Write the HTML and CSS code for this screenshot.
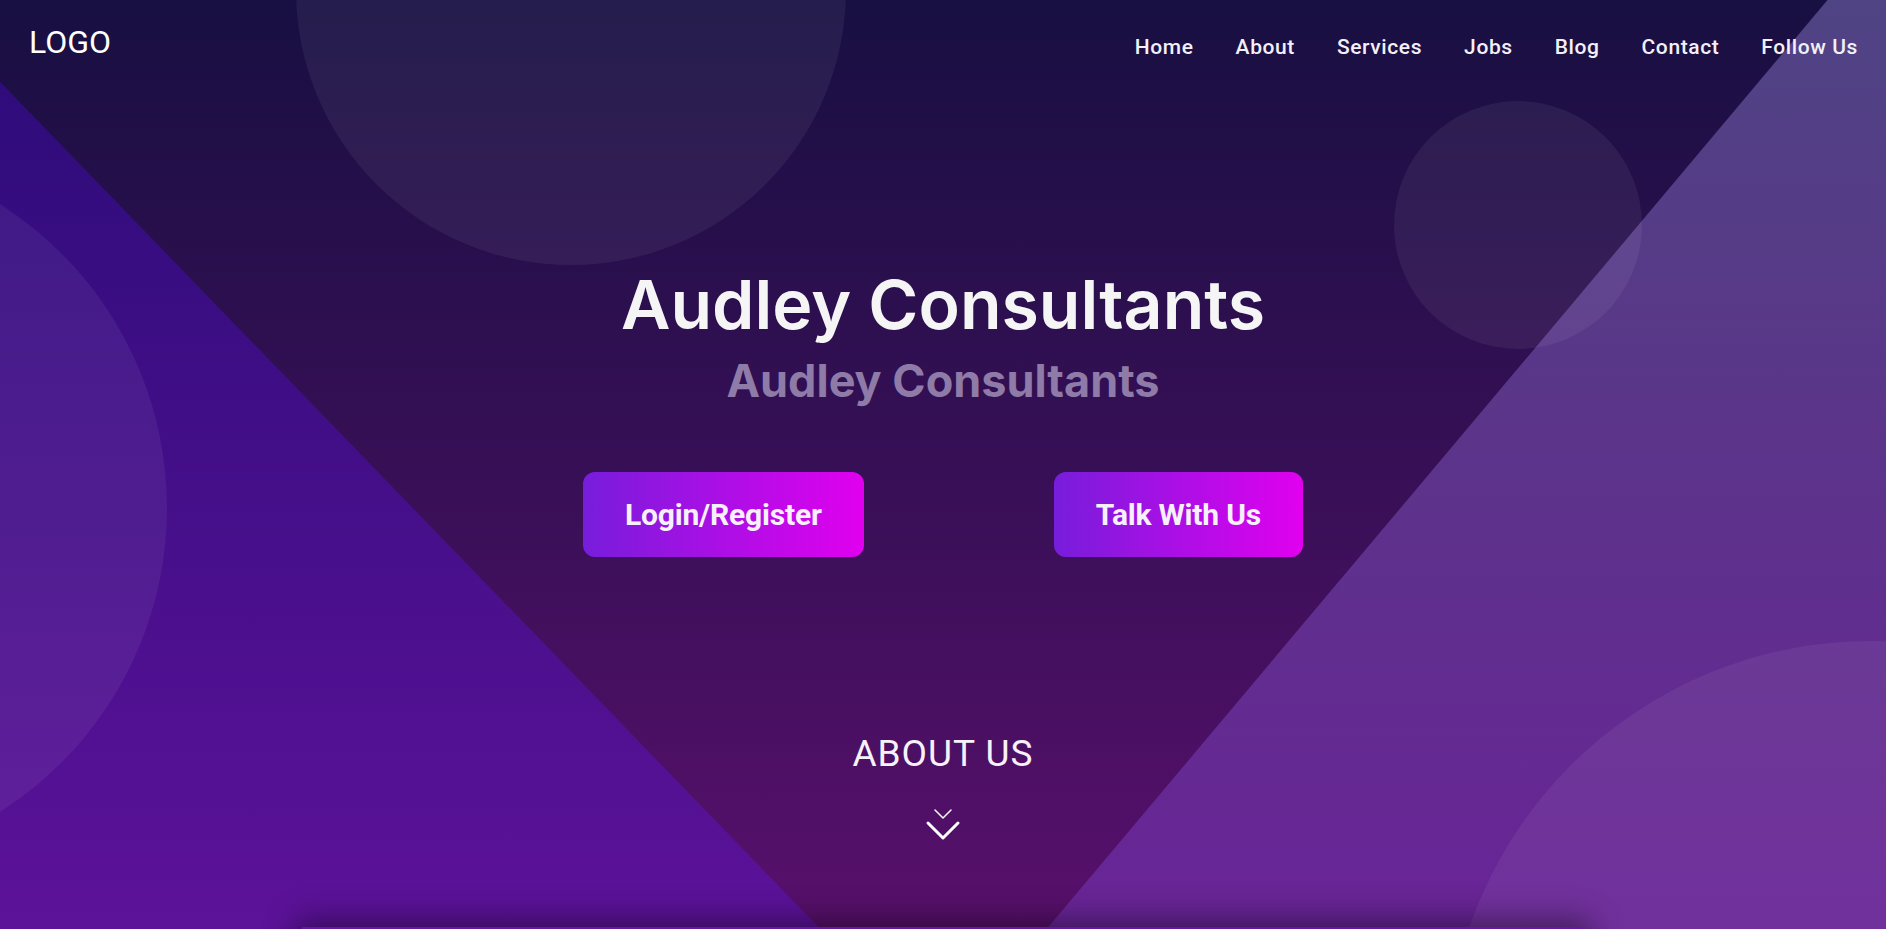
FILE: index.html
```html
<!DOCTYPE html>
<html lang="en">
<head>
    <meta charset="UTF-8">
    <meta name="viewport" content="width=device-width, initial-scale=1.0">
    <title>Audley Consultants</title>
    <link rel="stylesheet" href="styles.css">
</head>
<body>
    <section class="hero">
        <div class="shape shape-left"></div>
        <div class="shape shape-right"></div>
        <span class="bubble bubble-top"></span>
        <span class="bubble bubble-side"></span>
        <span class="bubble bubble-small"></span>
        <span class="bubble bubble-corner"></span>

        <header class="topbar">
            <a href="#" class="logo">LOGO</a>
            <nav class="menu">
                <a href="#">Home</a>
                <a href="#">About</a>
                <a href="#">Services</a>
                <a href="#">Jobs</a>
                <a href="#">Blog</a>
                <a href="#">Contact</a>
                <a href="#">Follow Us</a>
            </nav>
        </header>

        <div class="hero-content">
            <h1>Audley Consultants</h1>
            <p class="subtitle">Audley Consultants</p>

            <div class="actions">
                <a href="#" class="btn">Login/Register</a>
                <a href="#" class="btn">Talk With Us</a>
            </div>

            <h2 class="about-link">ABOUT US</h2>
            <svg class="scroll-down" width="36" height="34" viewBox="0 0 36 34" fill="none" stroke="#fff" stroke-linecap="round" stroke-linejoin="round">
                <path d="M10 3 L18 11 L26 3" stroke-width="1.5"/>
                <path d="M3 16 L18 31 L33 16" stroke-width="3"/>
            </svg>
        </div>
    </section>

    <section class="about">
        <div class="about-card"></div>
    </section>
</body>
</html>
```

FILE: styles.css
```css
html {
    scrollbar-width: none;
}

body::-webkit-scrollbar {
    display: none;
}

body {
    margin: 0;
    font-family: Roboto, "Liberation Sans", sans-serif;
    background-color: #58106c;
    color: #fff;
}

a {
    color: inherit;
    text-decoration: none;
}

.hero {
    position: relative;
    height: 100vh;
    overflow: hidden;
    background: linear-gradient(180deg, #180f42 0%, #370f56 50%, #58106c 100%);
}

/* background decoration */
.shape {
    position: absolute;
    inset: 0;
}

.shape-left {
    background: linear-gradient(180deg, #2a0b78 0%, #5c1299 100%);
    clip-path: polygon(0 8.8%, 43.5% 100%, 0 100%);
}

.shape-right {
    background: linear-gradient(180deg, #4f4484 0%, #5b3589 45%, #692497 100%);
    clip-path: polygon(96.9% 0, 100% 0, 100% 100%, 55.5% 100%);
}

.bubble {
    position: absolute;
    border-radius: 50%;
    background-color: rgba(255, 255, 255, 0.06);
}

.bubble-top {
    left: 296px;
    top: -285px;
    width: 550px;
    height: 550px;
}

.bubble-side {
    left: -553px;
    top: 148px;
    width: 720px;
    height: 720px;
}

.bubble-small {
    left: 1394px;
    top: 101px;
    width: 248px;
    height: 248px;
}

.bubble-corner {
    left: 1446px;
    top: 641px;
    width: 850px;
    height: 850px;
}

/* header */
.topbar {
    position: relative;
    display: flex;
    justify-content: space-between;
    align-items: flex-start;
    padding: 27px 28px 0 29px;
}

.logo {
    font-size: 32px;
    line-height: 31px;
}

.menu {
    display: flex;
    gap: 42px;
    margin-top: 8px;
}

.menu a {
    font-size: 21px;
    line-height: 24px;
    font-weight: 500;
    letter-spacing: 0.6px;
    color: #f3f0f8;
}

/* hero */
.hero-content {
    position: relative;
    display: flex;
    flex-direction: column;
    align-items: center;
    padding-top: 204px;
}

.hero-content h1 {
    margin: 0;
    font-family: Inter, "Noto Sans", sans-serif;
    font-size: 68px;
    line-height: 82px;
    font-weight: 600;
    color: #f5f5f5;
}

.subtitle {
    margin: 8px 0 0;
    font-family: Inter, "Noto Sans", sans-serif;
    font-size: 45px;
    line-height: 56px;
    font-weight: 700;
    color: #8f7ba8;
}

.actions {
    display: flex;
    gap: 190px;
    margin-top: 63px;
}

.btn {
    padding: 24px 42px;
    font-size: 30px;
    line-height: 37px;
    font-weight: 700;
    letter-spacing: -0.2px;
    color: #f6f0fb;
    border-radius: 12px;
    background: linear-gradient(90deg, #771ddb 0%, #e100ef 100%);
}

.about-link {
    margin: 175px 0 0;
    font-size: 37px;
    line-height: 44px;
    font-weight: 400;
    letter-spacing: 1px;
    color: #f7f2fa;
}

.scroll-down {
    display: block;
    margin-top: 31px;
}

/* next section */
.about {
    padding: 0 0 60px;
}

.about-card {
    position: relative;
    width: 68%;
    height: 400px;
    margin: -2px auto 0;
    background-color: #6418a0;
    box-shadow: 0 0 30px 6px rgba(0, 0, 0, 0.45);
}
```
